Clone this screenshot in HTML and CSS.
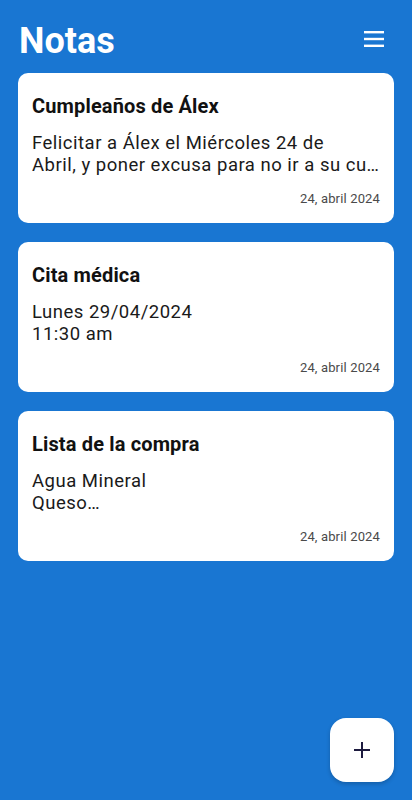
FILE: index.html
```html
<!DOCTYPE html>
<html lang="es">
<head>
    <meta charset="UTF-8">
    <link rel="stylesheet" href="styles.css">
</head>
<body>
    <div class="app">
        <header class="top-bar">
            <h1 class="title">Notas</h1>
            <button class="menu-btn" aria-label="Menú">
                <svg width="20" height="16" viewBox="0 0 20 16">
                    <rect x="0" y="0" width="20" height="2.4" fill="#fff"/>
                    <rect x="0" y="6.8" width="20" height="2.4" fill="#fff"/>
                    <rect x="0" y="13.6" width="20" height="2.4" fill="#fff"/>
                </svg>
            </button>
        </header>

        <div class="note-list">
            <div class="note-card">
                <div class="note-title">Cumpleaños de Álex</div>
                <div class="note-body">Felicitar a Álex el Miércoles 24 de<br>Abril, y poner excusa para no ir a su cu…</div>
                <div class="note-date">24, abril 2024</div>
            </div>
            <div class="note-card">
                <div class="note-title">Cita médica</div>
                <div class="note-body">Lunes 29/04/2024<br>11:30 am</div>
                <div class="note-date">24, abril 2024</div>
            </div>
            <div class="note-card">
                <div class="note-title">Lista de la compra</div>
                <div class="note-body">Agua Mineral<br>Queso…</div>
                <div class="note-date">24, abril 2024</div>
            </div>
        </div>

        <button class="fab" aria-label="Nueva nota">
            <svg width="18" height="18" viewBox="0 0 18 18">
                <path d="M9 1v16M1 9h16" stroke="#1d1b3f" stroke-width="2" fill="none"/>
            </svg>
        </button>
    </div>
</body>
</html>
```

FILE: styles.css
```css
html, body {
    margin: 0;
    padding: 0;
    height: 100%;
}

body {
    background: #1976d2;
    font-family: Roboto, "Noto Sans", sans-serif;
    color: #111;
}

.app {
    min-height: 100%;
}

.top-bar {
    display: flex;
    justify-content: space-between;
    align-items: center;
    padding: 19px 28px 10px 19px;
}

.title {
    margin: 0;
    font-size: 36px;
    font-weight: 700;
    color: #fff;
    line-height: 44px;
}

.menu-btn {
    background: none;
    border: 0;
    padding: 0;
    display: flex;
    margin-top: -4px;
}

.note-list {
    display: flex;
    flex-direction: column;
    gap: 19px;
    padding: 0 18px;
}

.note-card {
    background: #fff;
    border-radius: 10px;
    padding: 22px 14px 17px;
    height: 150px;
    box-sizing: border-box;
    display: flex;
    flex-direction: column;
}

.note-title {
    font-size: 20px;
    font-weight: 700;
    line-height: 23px;
    letter-spacing: 0.15px;
    color: #111;
}

.note-body {
    margin-top: 14px;
    font-size: 18.5px;
    line-height: 22px;
    letter-spacing: 0.5px;
    color: #1a1a1a;
    white-space: nowrap;
    overflow: hidden;
}

.note-date {
    margin-top: auto;
    text-align: right;
    font-size: 13px;
    line-height: 15px;
    letter-spacing: 0.15px;
    color: #4a4a4a;
}

.fab {
    position: fixed;
    right: 18px;
    bottom: 18px;
    width: 64px;
    height: 64px;
    border: 0;
    border-radius: 16px;
    background: #fff;
    display: flex;
    justify-content: center;
    align-items: center;
    box-shadow: 0 2px 4px rgba(0, 0, 0, 0.2);
    padding: 0;
}
```
